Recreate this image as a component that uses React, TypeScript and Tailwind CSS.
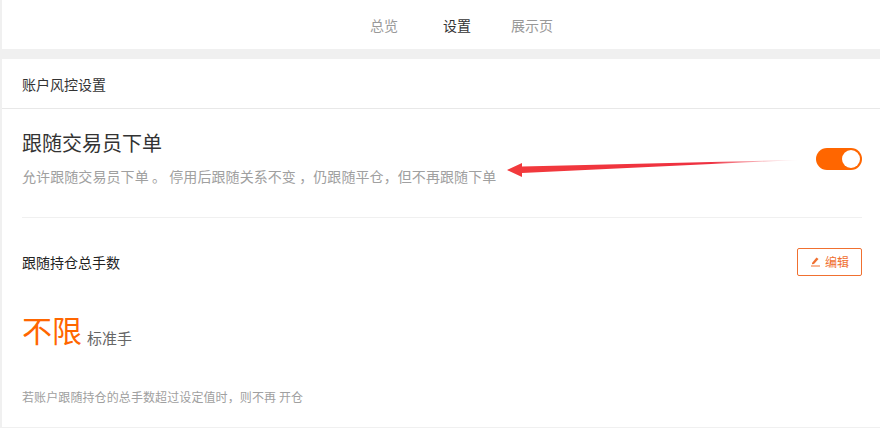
const font = { fontFamily: '"Noto Sans CJK SC", "Liberation Sans", sans-serif' };

export default function App() {
  return (
    <div style={font} className="relative h-[428px] w-[880px] overflow-hidden bg-[#f0f0f0] pl-[2px]">
      <nav className="flex h-[49px] items-center bg-white pl-[368px] text-sm">
        <span className="mr-[45px] text-[#999999]">总览</span>
        <span className="mr-[40px] text-[#333333]">设置</span>
        <span className="text-[#999999]">展示页</span>
      </nav>

      <main className="mt-[10px] h-[368px] bg-white">
        <div className="flex h-[50px] items-center border-b border-[#e8e8e8] pl-5 text-sm text-[#333333]">
          账户风控设置
        </div>

        <div className="pr-[18px] pl-5">
          <section className="flex h-[109px] items-center justify-between border-b border-[#f0f0f0] pb-[11px]">
            <div>
              <h2 className="text-xl leading-[28px] text-[#333333]">跟随交易员下单</h2>
              <p className="mt-[9px] text-sm leading-[20px] tracking-[0.08px] whitespace-pre text-[#a0a0a0]">
                允许跟随交易员下单 。 停用后跟随关系不变 ，仍跟随平仓，但不再跟随下单
              </p>
            </div>
            <div className="mt-[3px] flex h-[22px] w-[46px] items-center justify-end rounded-full bg-[#ff6600] pr-[2px]">
              <span className="h-[18px] w-[18px] rounded-full bg-white" />
            </div>
          </section>

          <section className="flex items-center justify-between pt-[30px]">
            <h3 className="mb-[1px] text-sm text-[#222222]">跟随持仓总手数</h3>
            <button className="flex h-[28px] w-[65px] items-center justify-center gap-[4px] rounded-[2px] border border-[#f07030] text-xs text-[#f07030]">
              <svg width="11" height="11" viewBox="0 0 11 11" className="-mt-[2px]">
                <path d="M2 7 L6.5 1.5 L8.5 3 L4 8 L2 8.2 Z" fill="#f07030" />
                <path d="M1 10 H10" stroke="#f07030" strokeWidth="1" />
              </svg>
              编辑
            </button>
          </section>

          <div className="mt-[33px] flex items-end gap-[5px]">
            <span className="text-[30px] leading-[40px] text-[#ff6600]">不限</span>
            <span className="pb-[1px] text-[15px] leading-[20px] text-[#666666]">标准手</span>
          </div>

          <p className="mt-[39px] text-xs leading-[18px] tracking-[0.1px] whitespace-pre text-[#a0a0a0]">
            若账户跟随持仓的总手数超过设定值时，则不再 开仓
          </p>
        </div>
      </main>

      {/* red annotation arrow drawn over the page */}
      <svg className="absolute top-[150px] left-[500px]" width="305" height="32" viewBox="0 0 305 32">
        <defs>
          <linearGradient id="arrowFade" x1="0" x2="1" y1="0" y2="0">
            <stop offset="0" stopColor="#f23a3c" />
            <stop offset="0.7" stopColor="#ee3040" />
            <stop offset="1" stopColor="#f6a0a8" stopOpacity="0.2" />
          </linearGradient>
        </defs>
        <path d="M7 20 L22 13 L22 16.5 L298 10 L22 23 L22 27 Z" fill="url(#arrowFade)" />
      </svg>
    </div>
  );
}
